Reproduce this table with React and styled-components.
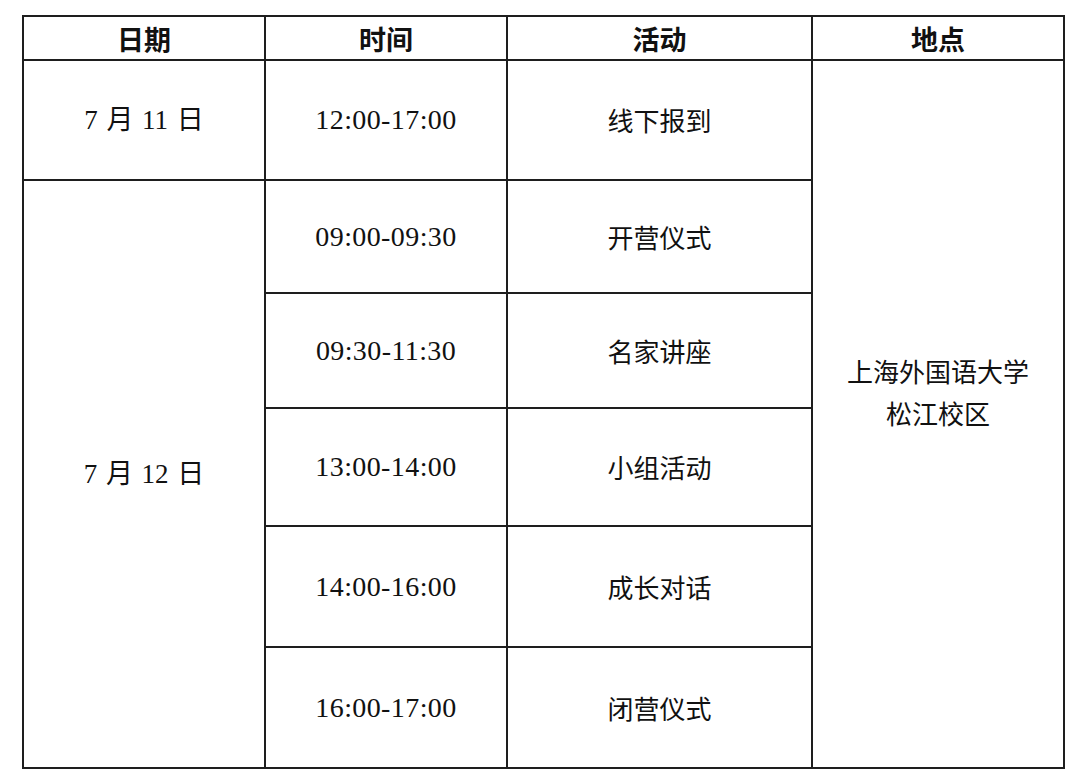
import React from "react";
import styled, { createGlobalStyle } from "styled-components";

const GlobalStyle = createGlobalStyle`
	html,
	body {
		margin: 0;
		padding: 0;
		background: #fff;
	}
`;

const Page = styled.main`
	padding: 15px 0 0 22px;
	width: 1080px;
	height: 784px;
	box-sizing: border-box;
	background: #fff;
`;

const Schedule = styled.table`
	border-collapse: collapse;
	table-layout: fixed;
	width: 1043px;
	color: #111;
	font-family: "Liberation Serif", "Noto Sans CJK SC", serif;
	font-size: 27px;

	td,
	th {
		border: 2px solid #1e1e1e;
		padding: 0;
		text-align: center;
		vertical-align: middle;
	}
`;

const Row = styled.tr`
	height: ${props => props.h}px;
`;

const HeadCell = styled.th`
	font-family: "Noto Sans CJK SC", sans-serif;
	font-weight: 700;
	font-size: 27px;
	line-height: 1;
`;

const DateCell = styled.td`
	line-height: 1;
	word-spacing: 2px;
`;

const TimeCell = styled.td`
	font-size: 28px;
	letter-spacing: 0.4px;
	line-height: 1;
`;

const ActivityCell = styled.td`
	font-family: "Noto Sans CJK SC", sans-serif;
	font-size: 26px;
	line-height: 1;
`;

const PlaceCell = styled.td`
	font-family: "Noto Sans CJK SC", sans-serif;
	font-size: 26px;
	line-height: 42px;
	padding-bottom: 44px !important;
`;

const columns = [242, 242, 305, 252];

const day12 = [
	{ time: "09:00-09:30", activity: "开营仪式", h: 113 },
	{ time: "09:30-11:30", activity: "名家讲座", h: 115 },
	{ time: "13:00-14:00", activity: "小组活动", h: 118 },
	{ time: "14:00-16:00", activity: "成长对话", h: 121 },
	{ time: "16:00-17:00", activity: "闭营仪式", h: 121 }
];

export default function App() {
	return (
		<>
			<GlobalStyle />
			<Page>
				<Schedule>
					<colgroup>
						{columns.map((w, i) => (
							<col key={i} style={{ width: w }} />
						))}
					</colgroup>
					<thead>
						<Row h={44}>
							<HeadCell>日期</HeadCell>
							<HeadCell>时间</HeadCell>
							<HeadCell>活动</HeadCell>
							<HeadCell>地点</HeadCell>
						</Row>
					</thead>
					<tbody>
						<Row h={120}>
							<DateCell>7 月 11 日</DateCell>
							<TimeCell>12:00-17:00</TimeCell>
							<ActivityCell>线下报到</ActivityCell>
							<PlaceCell rowSpan={7}>
								上海外国语大学
								<br />
								松江校区
							</PlaceCell>
						</Row>
						{day12.map((item, index) => (
							<Row h={item.h} key={item.time}>
								{index === 0 && (
									<DateCell rowSpan={day12.length}>7 月 12 日</DateCell>
								)}
								<TimeCell>{item.time}</TimeCell>
								<ActivityCell>{item.activity}</ActivityCell>
							</Row>
						))}
					</tbody>
				</Schedule>
			</Page>
		</>
	);
}
